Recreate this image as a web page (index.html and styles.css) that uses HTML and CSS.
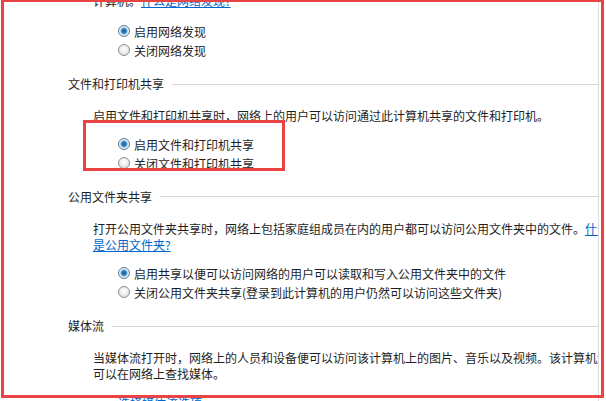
FILE: index.html
```html
<!DOCTYPE html>
<html lang="zh-CN">
<head>
    <meta charset="UTF-8">
    <meta name="viewport" content="width=device-width, initial-scale=1.0">
    <title>高级共享设置</title>
    <link rel="stylesheet" href="styles.css">
</head>
<body>
    <div class="pane">
        <div class="content">
            <p class="para first">计算机。<a href="#">什么是网络发现?</a></p>
            <ul class="options">
                <li><span class="radio checked"></span>启用网络发现</li>
                <li><span class="radio"></span>关闭网络发现</li>
            </ul>

            <h3 class="heading">文件和打印机共享</h3>
            <p class="para">启用文件和打印机共享时，网络上的用户可以访问通过此计算机共享的文件和打印机。</p>
            <ul class="options">
                <li><span class="radio checked"></span>启用文件和打印机共享</li>
                <li><span class="radio"></span>关闭文件和打印机共享</li>
            </ul>

            <h3 class="heading">公用文件夹共享</h3>
            <p class="para">打开公用文件夹共享时，网络上包括家庭组成员在内的用户都可以访问公用文件夹中的文件。<a href="#">什么是公用文件夹?</a></p>
            <ul class="options">
                <li><span class="radio checked"></span>启用共享以便可以访问网络的用户可以读取和写入公用文件夹中的文件</li>
                <li><span class="radio"></span>关闭公用文件夹共享(登录到此计算机的用户仍然可以访问这些文件夹)</li>
            </ul>

            <h3 class="heading">媒体流</h3>
            <p class="para">当媒体流打开时，网络上的人员和设备便可以访问该计算机上的图片、音乐以及视频。该计算机还可以在网络上查找媒体。</p>
            <p class="more"><a href="#">选择媒体流选项...</a></p>
        </div>
    </div>

    <div class="mark mark-outer"></div>
    <div class="mark mark-inner"></div>
</body>
</html>
```

FILE: styles.css
```css
body {
    margin: 0;
    background: #fff;
    font-family: "Noto Sans CJK SC", sans-serif;
    font-size: 12px;
    color: #1e1e1e;
    position: relative;
    height: 401px;
    overflow: hidden;
}

a {
    color: #0066cc;
    text-decoration: underline;
}

.pane {
    width: 598px;
    height: 401px;
    border-right: 1px solid #dcdcdc;
    overflow: hidden;
}

.content {
    width: 640px;
    margin-top: -7.5px;
    padding-left: 68px;
}

.heading {
    display: flex;
    align-items: center;
    margin: 0;
    font-size: 12px;
    font-weight: normal;
    line-height: 18px;
}

.heading::after {
    content: "";
    flex: 1;
    height: 1px;
    margin-left: 8px;
    background: #d5d5d5;
}

.para {
    width: 520px;
    margin: 14.75px 0 10.25px 25px;
    line-height: 16.5px;
}

.para.first {
    margin-top: 0;
    margin-bottom: 12.75px;
}

.options {
    list-style: none;
    margin: 0 0 15.25px 50px;
    padding: 0;
}

.options li {
    display: flex;
    align-items: center;
    line-height: 19px;
    white-space: nowrap;
}

.radio {
    width: 12px;
    height: 12px;
    margin-right: 4px;
    box-sizing: border-box;
    border: 1px solid #8f9090;
    border-radius: 50%;
    background: radial-gradient(circle at 50% 40%, #ffffff 0, #f0f0f0 40%, #d4d4d4 100%);
    flex-shrink: 0;
}

.radio.checked {
    border-color: #5a7c98;
    background: radial-gradient(circle, #1f5d92 0, #2b74b4 1.8px, #6fb1e0 3.2px, #eef4f8 4px, #d8dde2 100%);
}

.more {
    margin: 10.25px 0 0 50px;
    line-height: 19px;
}

.mark {
    position: absolute;
    box-sizing: border-box;
    border: 3px solid #e94343;
}

.mark-outer {
    left: 1px;
    top: -1px;
    width: 603px;
    height: 399px;
}

.mark-inner {
    left: 83px;
    top: 120px;
    width: 202px;
    height: 51px;
}
```
